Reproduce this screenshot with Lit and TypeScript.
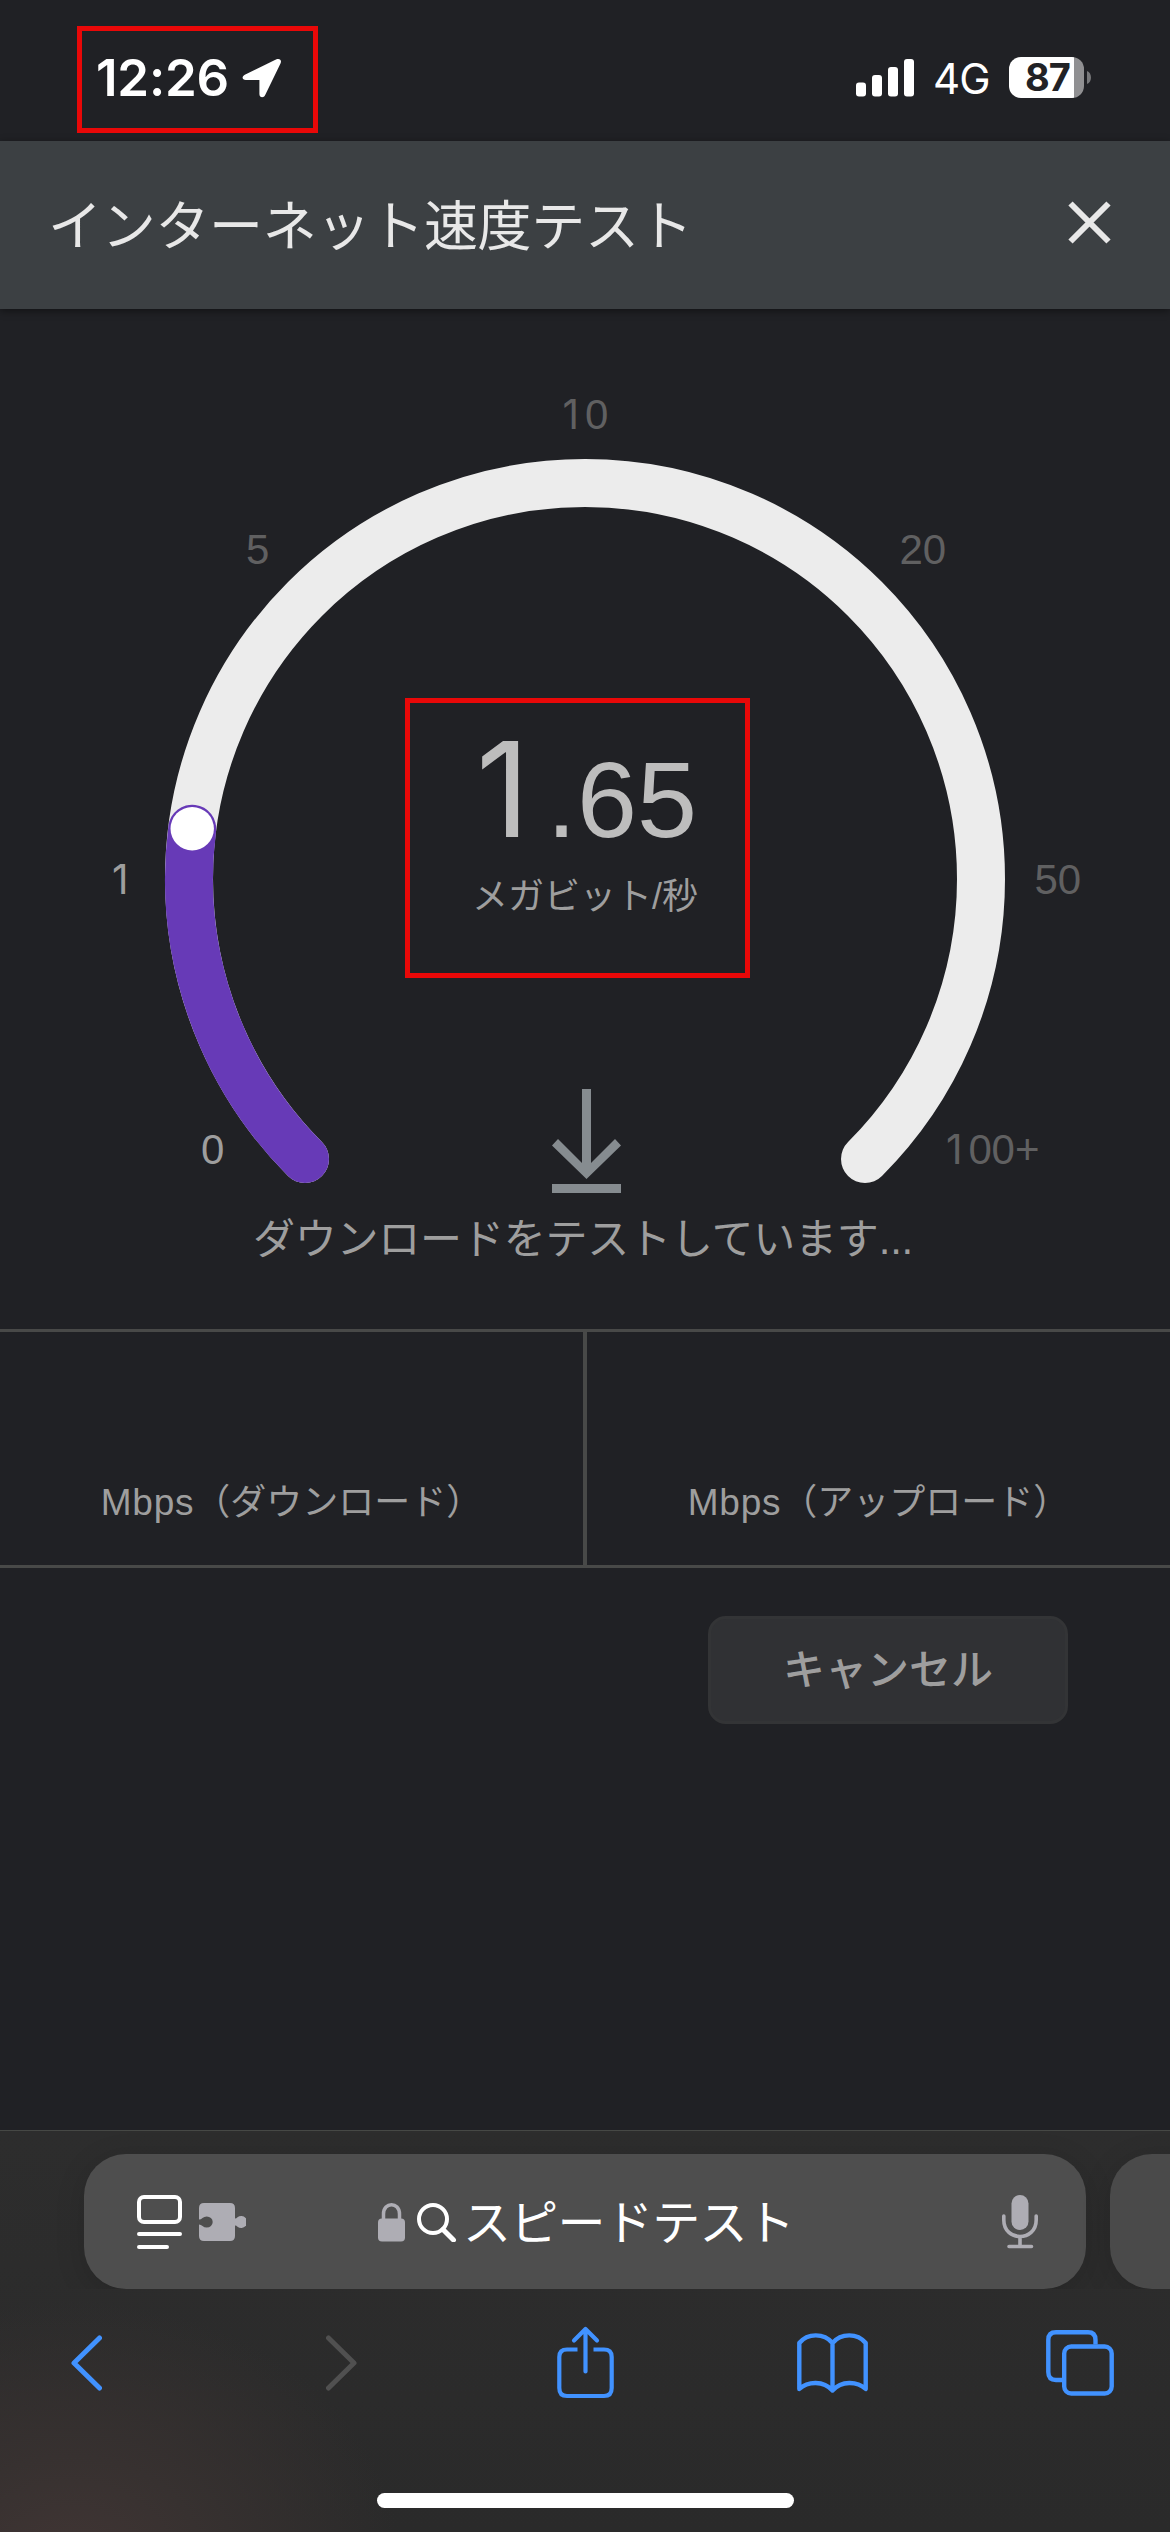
import { LitElement, html, css, svg } from "lit";
import { customElement, property } from "lit/decorators.js";

const CX = 585;
const CY = 570;
const RADIUS = 396;

/** Point on the dial; angle in degrees, clockwise from the positive x axis. */
const pointAt = (deg: number) => {
  const a = (deg * Math.PI) / 180;
  return { x: CX + RADIUS * Math.cos(a), y: CY + RADIUS * Math.sin(a) };
};

const arc = (from: number, to: number) => {
  const p = pointAt(from);
  const q = pointAt(to);
  const large = to - from > 180 ? 1 : 0;
  return `M${p.x} ${p.y}A${RADIUS} ${RADIUS} 0 ${large} 1 ${q.x} ${q.y}`;
};

@customElement("status-bar")
export class StatusBar extends LitElement {
  static styles = css`
    :host {
      display: flex;
      justify-content: space-between;
      height: 141px;
      box-sizing: border-box;
      padding: 26px 79px 0 77px;
      color: #fff;
      font-family: Inter, "Liberation Sans", sans-serif;
    }
    .clock {
      display: flex;
      align-items: center;
      width: 241px;
      height: 107px;
      box-sizing: border-box;
      border: 5px solid #e90808;
      padding: 0 0 3px 14px;
      gap: 14px;
      font-size: 51px;
      font-weight: 600;
      line-height: 60px;
    }
    .time {
      width: 132px;
      letter-spacing: -0.2px;
      white-space: nowrap;
    }
    .right {
      display: flex;
      align-items: center;
      height: 103px;
    }
    .network {
      margin: 3px 20px 0 19px;
      width: 56px;
      font-size: 42px;
      line-height: 50px;
      letter-spacing: -0.8px;
      white-space: nowrap;
    }
    .battery {
      display: flex;
      align-items: center;
      gap: 3px;
    }
    .cell {
      width: 75px;
      height: 41px;
      border-radius: 12px;
      box-sizing: border-box;
      padding-left: 2px;
      background: linear-gradient(90deg, #fff 65px, #909092 65px);
      color: #212226;
      text-align: center;
      font-size: 38px;
      line-height: 41px;
      font-weight: 700;
      letter-spacing: -0.8px;
    }
    svg {
      display: block;
    }
  `;
  render() {
    return html`
      <div class="clock">
        <span class="time">12:26</span>
        <svg width="40" height="40" viewBox="0 0 40 40">
          <path
            d="M34.500 1.300 L2.800 16.700 C-.8 18.600 .3 22.100 3.800 22.100 H17.400 V36 C17.400 39.900 21.800 40.300 23.200 37 L38.600 5.200 C40 2 37.500 0 34.500 1.300Z"
            fill="#fff"
          />
        </svg>
      </div>
      <div class="right">
        <svg width="58" height="38" viewBox="0 0 58 38" fill="#fff">
          <rect x="0" y="23.500" width="10" height="14" rx="3" />
          <rect x="16" y="16" width="10" height="21.500" rx="3" />
          <rect x="32" y="8" width="10" height="29.500" rx="3" />
          <rect x="48" y="0" width="10" height="37.500" rx="3" />
        </svg>
        <span class="network">4G</span>
        <div class="battery">
          <div class="cell">87</div>
          <svg width="4" height="13" viewBox="0 0 4 13">
            <path d="M0 0C5.300 2 5.300 11 0 13Z" fill="#77787a" />
          </svg>
        </div>
      </div>
    `;
  }
}

@customElement("speed-gauge")
export class SpeedGauge extends LitElement {
  @property({ type: Number }) progress = 187.3;

  static styles = css`
    :host {
      display: block;
    }
    svg {
      display: block;
    }
    text {
      font-family: "Liberation Sans", Arial, sans-serif;
      font-size: 42px;
      fill: #606061;
    }
    .one {
      font-family: Inter, sans-serif;
      font-size: 0.97em;
      font-weight: 400;
    }
    .reached {
      fill: #9e9e9e;
    }
    .value {
      font-size: 108px;
      fill: #bdbdbd;
    }
    .value-one {
      font-family: Inter, sans-serif;
      font-size: 132px;
    }
    .unit {
      font-family: "Liberation Sans", "Noto Sans CJK JP", sans-serif;
      font-size: 36px;
      fill: #9e9e9e;
    }
  `;
  render() {
    const knob = pointAt(this.progress);
    return html`
      <svg width="1170" height="891" viewBox="0 0 1170 891" fill="none">
        <path d=${arc(135, 405)} stroke="#ececec" stroke-width="48" stroke-linecap="round" />
        <path d=${arc(135, this.progress)} stroke="#673ab7" stroke-width="48" stroke-linecap="round" />
        <circle cx=${knob.x} cy=${knob.y} r="21.700" fill="#fff" />
        ${this.labels()}
        <text class="value"><tspan class="value-one" x="476" y="528">1</tspan><tspan x="546.500 577 637" y="528">.65</tspan></text>
        <text class="unit" x="585" y="600" text-anchor="middle">メガビット/秒</text>
        <rect x="407.500" y="391.500" width="340" height="275" stroke="#e90808" stroke-width="5" />
        <path
          d="M582 780H591V854L615 830L621 836.500L586.500 870L552 836.500L558 830L582 854ZM552 875H621V884H552Z"
          fill="#868c90"
        />
      </svg>
    `;
  }
  private labels() {
    return svg`
      <text class="reached" x="201" y="855">0</text>
      <text class="reached" x="112" y="585"><tspan class="one">1</tspan></text>
      <text x="246" y="255">5</text>
      <text y="120"><tspan class="one" x="562.500">1</tspan><tspan x="585">0</tspan></text>
      <text x="899.500" y="255">20</text>
      <text x="1034.500" y="585">50</text>
      <text y="855"><tspan class="one" x="946">1</tspan><tspan x="968.500 991.500 1015">00+</tspan></text>
    `;
  }
}

@customElement("browser-bar")
export class BrowserBar extends LitElement {
  static styles = css`
    :host {
      display: flex;
      flex-direction: column;
      height: 402px;
      box-sizing: border-box;
      border-top: 1px solid #464845;
      background: radial-gradient(ellipse 330px 260px at 70px 430px, #403534 0%, #373130 40%, rgba(44, 44, 44, 0) 100%),
        linear-gradient(#2d2d2d, #2a2a2a);
      color: #fff;
    }
    .addresses {
      display: flex;
      gap: 24px;
      padding: 23px 0 0 84px;
      overflow: hidden;
    }
    .address {
      display: flex;
      flex: none;
      align-items: center;
      width: 1002px;
      height: 135px;
      box-sizing: border-box;
      padding: 0 48px 0 53px;
      border-radius: 42px;
      background: #4e4e4e;
      box-shadow: 0 6px 30px rgba(0, 0, 0, 0.14);
    }
    .next {
      width: 200px;
      background: #4a4a4a;
    }
    .query {
      display: flex;
      align-items: center;
      flex: 1;
      margin-left: 132px;
    }
    .query span {
      margin: 0 0 6px 6px;
      font-family: "Noto Sans CJK JP", sans-serif;
      font-size: 48px;
      line-height: 60px;
      letter-spacing: -0.7px;
      white-space: nowrap;
    }
    .reader {
      margin-right: 17px;
    }
    .lens {
      margin-left: 12px;
    }
    .tools {
      display: grid;
      grid-template-columns: 255px 231px 240px 249px 68px;
      align-items: center;
      height: 74px;
      margin-top: 37px;
      padding-left: 71px;
    }
    svg {
      display: block;
      flex: none;
    }
    .home {
      width: 417px;
      height: 15px;
      margin: 93px auto 0;
      border-radius: 8px;
      background: #fff;
    }
  `;
  render() {
    return html`
      <div class="addresses">
        <div class="address">
          <svg class="reader" width="45" height="56" viewBox="0 0 45 56" fill="none" stroke="#fff" stroke-width="4" stroke-linecap="round">
            <rect x="2" y="3" width="41" height="25" rx="5" />
            <path d="M2 40H43M2 53H30" />
          </svg>
          <svg width="47" height="38" viewBox="0 0 47 38" fill="#aeadb4">
            <path
              d="M5 0H31Q36 0 36 5V15.500Q37.500 15.500 38.500 14.300A6 6 0 1 1 38.500 23.700Q37.500 22.500 36 22.500V33Q36 38 31 38H5Q0 38 0 33V21.500Q2 21.500 3.500 23A6 5.600 0 1 0 3.500 15Q2 16.500 0 16.500V5Q0 0 5 0Z"
            />
          </svg>
          <div class="query">
            <svg width="27" height="40" viewBox="0 0 27 40">
              <path d="M5.500 18V12C5.500 -.5 21.500 -.5 21.500 12V18" fill="none" stroke="#aeadb4" stroke-width="3.500" />
              <rect y="16.500" width="27" height="23" rx="4" fill="#aeadb4" />
            </svg>
            <svg class="lens" width="40" height="40" viewBox="0 0 40 40" fill="none" stroke="#fff" stroke-width="4">
              <circle cx="16" cy="17" r="14" />
              <path d="M26 27.500L36.500 38" stroke-width="5" stroke-linecap="round" />
            </svg>
            <span>スピードテスト</span>
          </div>
          <svg width="36" height="54" viewBox="0 0 36 54">
            <rect x="9.500" y="0" width="17" height="35" rx="8.500" fill="#aeadb4" />
            <path
              d="M1.800 21V25C1.800 47 34.200 47 34.200 25V21M18 42V51M7 51.500H29.500"
              fill="none" stroke="#aeadb4" stroke-width="3.600" stroke-linecap="round"
            />
          </svg>
        </div>
        <div class="address next"></div>
      </div>
      <div class="tools">
        <svg width="31" height="56" viewBox="0 0 31 56" fill="none" stroke="#4192ff" stroke-width="5" stroke-linecap="round" stroke-linejoin="round">
          <path d="M28.500 3L3 28L28.500 53" />
        </svg>
        <svg width="31" height="56" viewBox="0 0 31 56" fill="none" stroke="#505050" stroke-width="5" stroke-linecap="round" stroke-linejoin="round">
          <path d="M2.500 3L28 28L2.500 53" />
        </svg>
        <svg width="57" height="74" viewBox="0 0 57 74" fill="none" stroke="#4192ff" stroke-width="4.200">
          <path d="M20.500 23.500H10Q2.300 23.500 2.300 31V62Q2.300 70 10 70H47Q54.700 70 54.700 62V31Q54.700 23.500 47 23.500H36.500" />
          <path d="M28.500 45.500V3.500M17 14.500L28.500 3L40 14.500" stroke-linecap="round" stroke-linejoin="round" />
        </svg>
        <svg width="71" height="60" viewBox="0 0 71 60" fill="none" stroke="#4192ff" stroke-width="4.400" stroke-linecap="round" stroke-linejoin="round">
          <path d="M35.500 10C27-.2 10.500-.2 2.300 10V56C11 48 26.500 47.500 35.500 57.500C44.500 47.500 60 48 68.700 56V10C60.500-.2 44-.2 35.500 10ZM35.500 10V57" />
        </svg>
        <svg width="68" height="66" viewBox="0 0 68 66" fill="none" stroke="#4192ff" stroke-width="4.400">
          <rect x="18.200" y="16.500" width="47.500" height="47" rx="7" />
          <path d="M49.500 14.500V10Q49.500 2.300 42 2.300H10Q2.300 2.300 2.300 10V42Q2.300 50 10 50H16" />
        </svg>
      </div>
      <div class="home"></div>
    `;
  }
}

@customElement("app-root")
export class AppRoot extends LitElement {
  static styles = css`
    :host {
      display: flex;
      flex-direction: column;
      width: 1170px;
      height: 2532px;
      overflow: hidden;
      background: #202125;
      color: #9e9e9e;
      font-family: "Liberation Sans", "Noto Sans CJK JP", sans-serif;
    }
    .header {
      display: flex;
      flex: none;
      align-items: center;
      justify-content: space-between;
      height: 168px;
      box-sizing: border-box;
      padding: 0 59px 2px 48px;
      background: #3c4043;
      box-shadow: 0 2px 8px rgba(0, 0, 0, 0.45);
      color: #e8e8e8;
      z-index: 1;
    }
    .title {
      margin: 6px 0 0;
      font-size: 54px;
      font-weight: 400;
      line-height: 80px;
      letter-spacing: -0.3px;
      white-space: nowrap;
    }
    .close {
      margin-bottom: 4px;
    }
    .progress {
      margin-top: 14px;
      height: 115px;
      padding-right: 4px;
      text-align: center;
      font-size: 42px;
      line-height: 52px;
      letter-spacing: -0.2px;
    }
    .results {
      display: grid;
      grid-template-columns: 583px 583px;
      gap: 4px;
      height: 233px;
      border-top: 3px solid #484948;
      border-bottom: 3px solid #484948;
      background: linear-gradient(90deg, transparent 583px, #484948 583px, #484948 587px, transparent 587px);
    }
    .result {
      display: flex;
      justify-content: center;
      align-items: flex-end;
      padding-bottom: 36px;
      font-size: 36px;
      line-height: 52px;
      white-space: nowrap;
    }
    .mbps {
      font-size: 37px;
      letter-spacing: 0.8px;
    }
    .actions {
      display: flex;
      justify-content: flex-end;
      flex: 1;
      padding: 48px 102px 0 0;
      align-items: flex-start;
    }
    .cancel {
      width: 360px;
      height: 108px;
      box-sizing: border-box;
      padding: 0 0 7px;
      border: 3px solid #333436;
      border-radius: 18px;
      background: #303134;
      color: #9e9e9e;
      font-family: "Noto Sans CJK JP", sans-serif;
      font-size: 42px;
      font-weight: 500;
    }
  `;
  render() {
    return html`
      <status-bar></status-bar>
      <header class="header">
        <h1 class="title">インターネット速度テスト</h1>
        <svg class="close" width="43" height="43" viewBox="0 0 43 43" stroke="#e8e8e8" stroke-width="6">
          <path d="M2.500 2.500L40.500 40.500M40.500 2.500L2.500 40.500" />
        </svg>
      </header>
      <speed-gauge></speed-gauge>
      <div class="progress">ダウンロードをテストしています...</div>
      <section class="results">
        <div class="result"><span class="mbps">Mbps</span>（ダウンロード）</div>
        <div class="result"><span class="mbps">Mbps</span>（アップロード）</div>
      </section>
      <div class="actions"><button class="cancel">キャンセル</button></div>
      <browser-bar></browser-bar>
    `;
  }
}
